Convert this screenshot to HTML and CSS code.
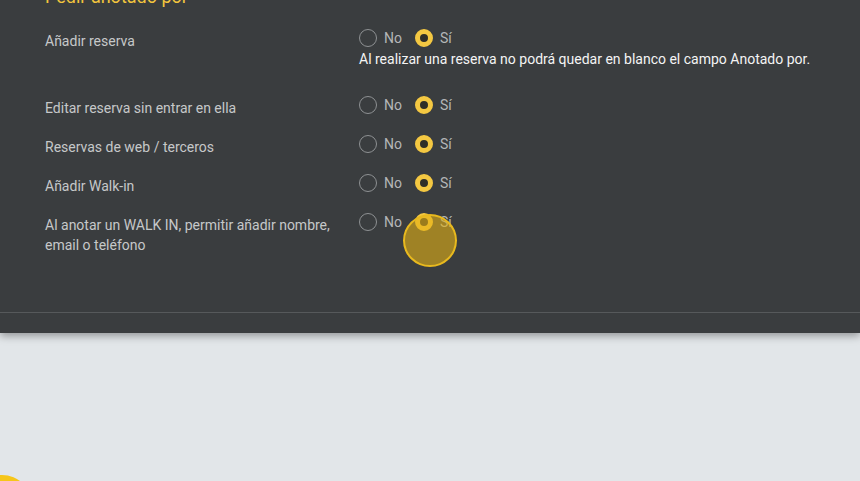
FILE: index.html
```html
<!DOCTYPE html>
<html lang="es">
<head>
    <meta charset="UTF-8">
    <meta name="viewport" content="width=device-width, initial-scale=1.0">
    <title>Anotado por</title>
    <link rel="stylesheet" href="styles.css">
</head>
<body>
    <div class="panel">
        <div class="panel-body">
            <h2 class="section-title">Pedir anotado por</h2>
            <div class="rows">
                <div class="row">
                    <div class="row-label">Añadir reserva</div>
                    <div class="row-control">
                        <div class="radio-group">
                            <label class="radio"><span class="radio-dot"></span>No</label>
                            <label class="radio checked"><span class="radio-dot"></span>Sí</label>
                        </div>
                        <div class="help-text">Al realizar una reserva no podrá quedar en blanco el campo Anotado por.</div>
                    </div>
                </div>
                <div class="row">
                    <div class="row-label">Editar reserva sin entrar en ella</div>
                    <div class="row-control">
                        <div class="radio-group">
                            <label class="radio"><span class="radio-dot"></span>No</label>
                            <label class="radio checked"><span class="radio-dot"></span>Sí</label>
                        </div>
                    </div>
                </div>
                <div class="row">
                    <div class="row-label">Reservas de web / terceros</div>
                    <div class="row-control">
                        <div class="radio-group">
                            <label class="radio"><span class="radio-dot"></span>No</label>
                            <label class="radio checked"><span class="radio-dot"></span>Sí</label>
                        </div>
                    </div>
                </div>
                <div class="row">
                    <div class="row-label">Añadir Walk-in</div>
                    <div class="row-control">
                        <div class="radio-group">
                            <label class="radio"><span class="radio-dot"></span>No</label>
                            <label class="radio checked"><span class="radio-dot"></span>Sí</label>
                        </div>
                    </div>
                </div>
                <div class="row">
                    <div class="row-label">Al anotar un WALK IN, permitir añadir nombre, email o teléfono</div>
                    <div class="row-control">
                        <div class="radio-group">
                            <label class="radio"><span class="radio-dot"></span>No</label>
                            <label class="radio checked clicked"><span class="radio-dot"></span>Sí<span class="click-ring"></span></label>
                        </div>
                    </div>
                </div>
            </div>
        </div>
        <div class="panel-footer"></div>
    </div>

    <div class="fab"></div>
</body>
</html>
```

FILE: styles.css
```css
html, body {
    margin: 0;
    padding: 0;
}
body {
    font-family: Roboto, "Liberation Sans", Arial, sans-serif;
    background-color: #e2e6e9;
    height: 481px;
    overflow: hidden;
    position: relative;
}
.panel {
    background-color: #3a3d3f;
    box-shadow: 0 3px 8px rgba(0, 0, 0, 0.35);
}
.panel-body {
    padding: 0 45px 57px 45px;
}
.section-title {
    margin: -15px 0 20px 0;
    font-size: 18px;
    line-height: 24px;
    font-weight: 400;
    color: #f2c53d;
}
.rows {
    display: flex;
    flex-direction: column;
    gap: 17px;
}
.row {
    display: grid;
    grid-template-columns: 314px 1fr;
    align-items: start;
}
.row-label {
    font-size: 14px;
    line-height: 20px;
    color: #c6c8c9;
    padding-top: 2px;
    padding-right: 12px;
}
.radio-group {
    display: flex;
    align-items: center;
    gap: 13px;
    height: 18px;
}
.radio {
    display: flex;
    align-items: center;
    gap: 7px;
    font-size: 14px;
    color: #b4b6b7;
    position: relative;
}
.radio-dot {
    width: 18px;
    height: 18px;
    box-sizing: border-box;
    border: 1.5px solid #8e9193;
    border-radius: 50%;
}
.radio.checked .radio-dot {
    border: 5px solid #f4c842;
    background-color: #2f2e28;
}
.help-text {
    margin-top: 2px;
    margin-bottom: 10px;
    font-size: 14px;
    line-height: 20px;
    color: #f4f4f4;
}
.click-ring {
    position: absolute;
    left: -12px;
    top: 1px;
    width: 54px;
    height: 53px;
    box-sizing: border-box;
    border-radius: 50%;
    border: 2px solid #e8b91e;
    background-color: rgba(226, 176, 20, 0.6);
}
.panel-footer {
    height: 20px;
    border-top: 1px solid #56595b;
}
.fab {
    position: absolute;
    left: -28px;
    top: 475px;
    width: 60px;
    height: 60px;
    border-radius: 50%;
    background-color: #f6c61a;
}
```
